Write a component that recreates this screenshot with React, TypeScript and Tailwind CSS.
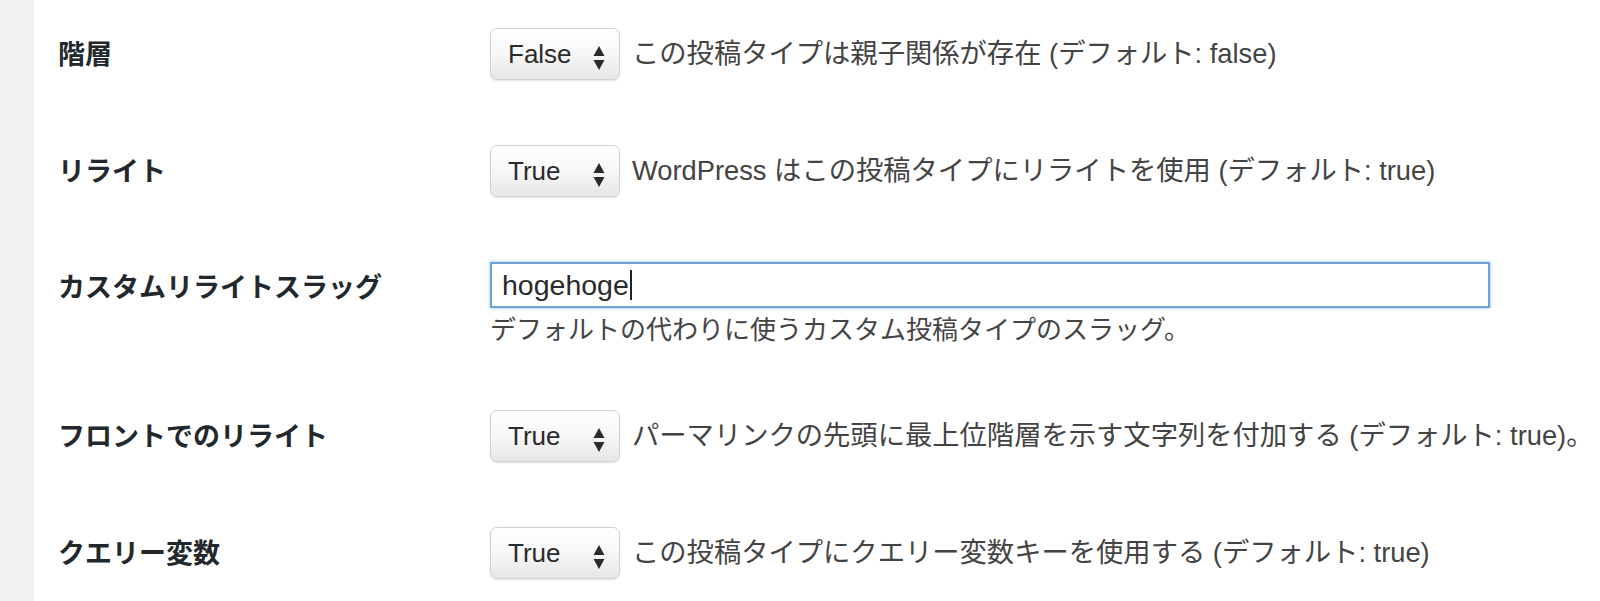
const jp = "font-['Liberation_Sans','Noto_Sans_CJK_JP',sans-serif]";

const Select = ({ value }: { value: string }) => (
  <div className="relative flex h-[52px] w-[130px] shrink-0 items-center rounded-[7px] border border-[#d2d2d2] bg-gradient-to-b from-[#ffffff] via-[#f7f7f7] to-[#e6e6e6] pl-[17px] text-[26px] text-[#2b2b2b] shadow-[0_1px_2px_rgba(0,0,0,0.12)]">
    {value}
    <svg
      className="absolute right-[14px] top-[16px]"
      width="12"
      height="26"
      viewBox="0 0 12 26"
    >
      <polygon points="6,1 11.5,11 0.5,11" fill="#2b2b2b" />
      <polygon points="0.5,15 11.5,15 6,25" fill="#2b2b2b" />
    </svg>
  </div>
);

const SelectRow = ({
  label,
  value,
  desc,
}: {
  label: string;
  value: string;
  desc: string;
}) => (
  <div className="flex items-start">
    <div className="flex h-[52px] w-[432px] shrink-0 items-center pt-[3px] text-[27px] font-bold text-[#23282d]">
      {label}
    </div>
    <div className="flex items-center gap-[12px]">
      <Select value={value} />
      <span className="whitespace-nowrap text-[27.3px] text-[#444]">{desc}</span>
    </div>
  </div>
);

export default function App() {
  return (
    <div className={`flex h-[601px] w-[1600px] overflow-hidden bg-white ${jp}`}>
      <div className="w-[34px] shrink-0 bg-[#f1f1f1]" />
      <div className="flex flex-col gap-[65px] pl-[24px] pt-[28px]">
        <SelectRow
          label="階層"
          value="False"
          desc="この投稿タイプは親子関係が存在 (デフォルト: false)"
        />
        <SelectRow
          label="リライト"
          value="True"
          desc="WordPress はこの投稿タイプにリライトを使用 (デフォルト: true)"
        />
        <div className="flex items-start">
          <div className="flex h-[52px] w-[432px] shrink-0 items-center text-[27px] font-bold text-[#23282d]">
            カスタムリライトスラッグ
          </div>
          <div className="flex flex-col">
            <div className="flex h-[46px] w-[1000px] items-center border-2 border-[#6ea3d3] bg-white pl-[10px] text-[28.5px] text-[#2b2b2b] shadow-[0_0_3px_rgba(91,157,217,0.7)]">
              hogehoge
              <span className="ml-[1px] h-[30px] w-[2px] bg-[#222]" />
            </div>
            <div className="h-[37px] text-[26px] leading-[44px] text-[#444]">
              デフォルトの代わりに使うカスタム投稿タイプのスラッグ。
            </div>
          </div>
        </div>
        <SelectRow
          label="フロントでのリライト"
          value="True"
          desc="パーマリンクの先頭に最上位階層を示す文字列を付加する (デフォルト: true)。"
        />
        <SelectRow
          label="クエリー変数"
          value="True"
          desc="この投稿タイプにクエリー変数キーを使用する (デフォルト: true)"
        />
      </div>
    </div>
  );
}
